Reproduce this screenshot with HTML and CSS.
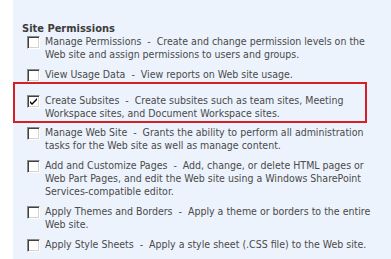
FILE: index.html
```html
<!DOCTYPE html>
<html lang="en">
<head>
    <meta charset="UTF-8">
    <title>Site Permissions</title>
    <link rel="stylesheet" href="styles.css">
</head>
<body>
    <div class="gutter"></div>
    <div class="panel">
        <div class="heading">Site Permissions</div>
        <div class="perm">
            <span class="check"></span>
            <div class="desc">Manage Permissions&nbsp; - &nbsp;Create and change permission levels on the Web site and assign permissions to users and groups.</div>
        </div>
        <div class="perm">
            <span class="check"></span>
            <div class="desc">View Usage Data&nbsp; - &nbsp;View reports on Web site usage.</div>
        </div>
        <div class="highlight">
            <div class="perm">
                <span class="check checked">
                    <svg viewBox="0 0 9 9" class="tick">
                        <path d="M1 4l2 2 5-5v2l-5 5-2-2z" fill="#000"/>
                    </svg>
                </span>
                <div class="desc">Create Subsites&nbsp; - &nbsp;Create subsites such as team sites, Meeting Workspace sites, and Document Workspace sites.</div>
            </div>
        </div>
        <div class="perm">
            <span class="check"></span>
            <div class="desc">Manage Web Site&nbsp; - &nbsp;Grants the ability to perform all administration tasks for the Web site as well as manage content.</div>
        </div>
        <div class="perm">
            <span class="check"></span>
            <div class="desc">Add and Customize Pages&nbsp; - &nbsp;Add, change, or delete HTML pages or Web Part Pages, and edit the Web site using a Windows SharePoint Services-compatible editor.</div>
        </div>
        <div class="perm">
            <span class="check"></span>
            <div class="desc">Apply Themes and Borders&nbsp; - &nbsp;Apply a theme or borders to the entire Web site.</div>
        </div>
        <div class="perm">
            <span class="check"></span>
            <div class="desc">Apply Style Sheets&nbsp; - &nbsp;Apply a style sheet (.CSS file) to the Web site.</div>
        </div>
    </div>
</body>
</html>
```

FILE: styles.css
```css
html, body {
    height: 100%;
    margin: 0;
    font-family: "DejaVu Sans Condensed", "DejaVu Sans", sans-serif;
    font-size: 10.5px;
    color: #4a4a4a;
    background-color: #ffffff;
    overflow: hidden;
}
body {
    display: flex;
}
.gutter {
    width: 13px;
    flex-shrink: 0;
}
.panel {
    flex: 1;
    background-color: #edf3fc;
    padding-top: 22px;
}
.heading {
    padding-left: 9px;
    font-weight: bold;
    font-size: 11px;
    line-height: 13px;
    color: #3c3c3c;
}
.perm {
    display: flex;
    align-items: flex-start;
    padding-left: 14px;
    margin-bottom: 7px;
}
.desc {
    width: 330px;
    margin-left: 5px;
    line-height: 13px;
}
.check {
    width: 11px;
    height: 11px;
    flex-shrink: 0;
    margin-top: 1px;
    background-color: #ffffff;
    border: 1px solid;
    border-color: #8c8c8c #ffffff #ffffff #8c8c8c;
    box-shadow: inset 1px 1px 0 #404040, inset -1px -1px 0 #d8d4cc;
    display: flex;
    align-items: center;
    justify-content: center;
}
.tick {
    width: 9px;
    height: 9px;
}
.highlight {
    width: 350px;
    border: 2px solid #d41f26;
    margin-top: -7px;
    margin-bottom: 3px;
    padding-top: 10px;
}
.highlight .perm {
    padding-left: 12px;
    margin-bottom: 1px;
}
```
